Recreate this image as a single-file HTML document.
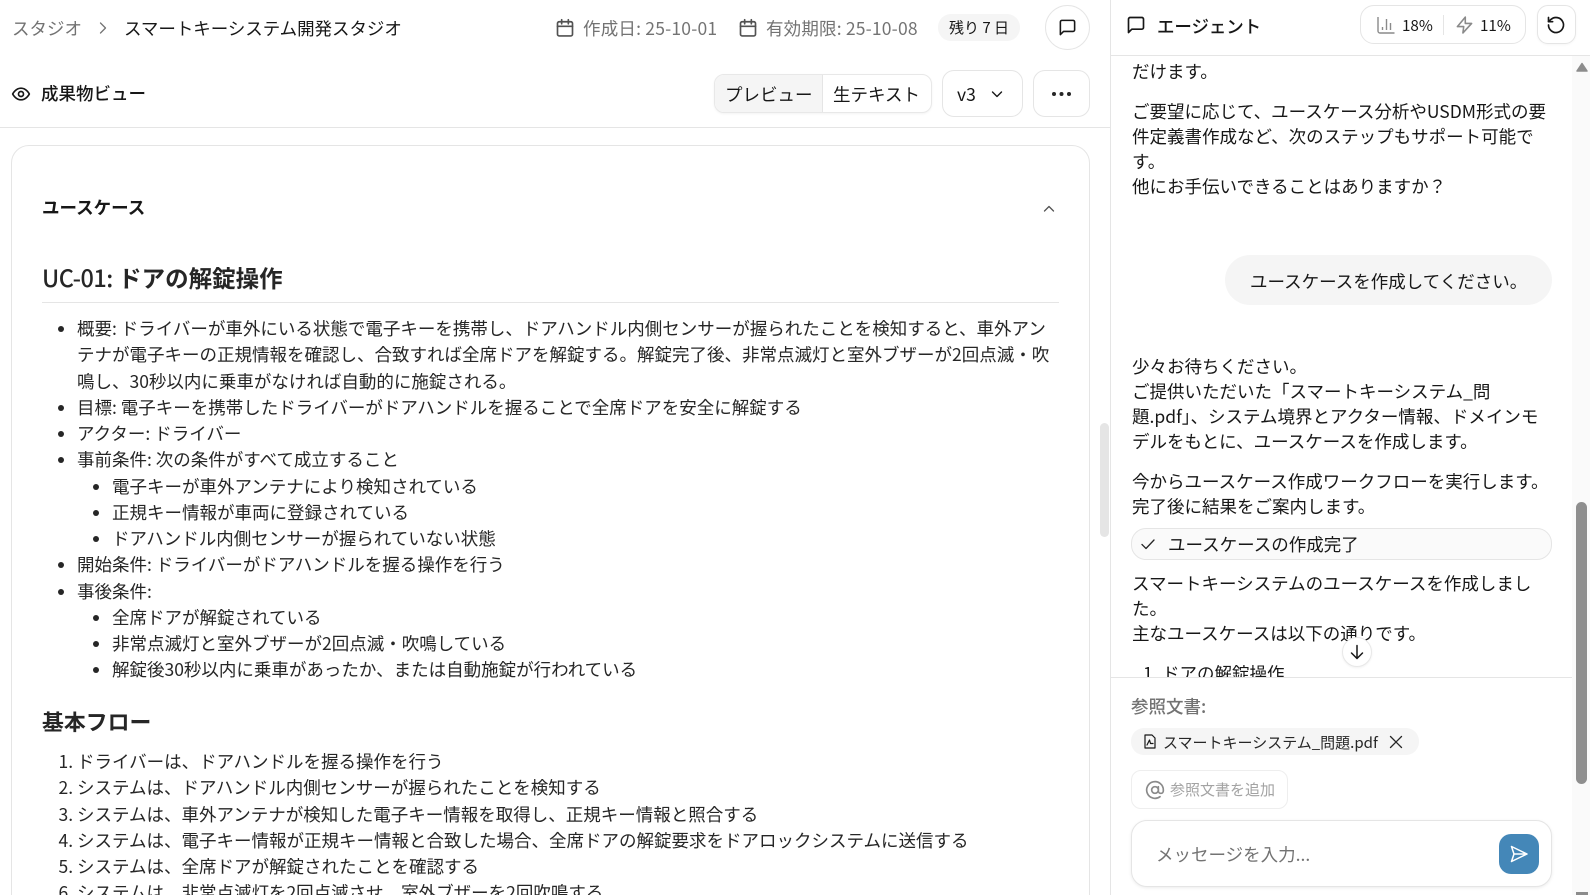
<!DOCTYPE html>
<html lang="ja"><head><meta charset="utf-8"><title>スタジオ</title>
<style>
*{box-sizing:border-box}
html,body{margin:0;padding:0;width:1590px;height:895px;overflow:hidden;background:#fff}
body{position:relative;font-family:"Noto Sans CJK JP","Liberation Sans",sans-serif;font-size:17.5px;color:#171717}
.t{position:absolute;white-space:nowrap;line-height:26px;height:26px}
.g{color:#737373}
.b{position:absolute;background:#fff;border:1px solid #e5e5e5}
svg{position:absolute;fill:none;stroke:currentColor;stroke-linecap:round;stroke-linejoin:round}
.list{position:absolute;margin:0;padding:0 0 0 35px;line-height:26.25px;color:#262626;white-space:nowrap}
.list ul,.list ol{margin:0;padding:0 0 0 35px}
.list li{margin:0}
</style></head><body>

<!-- top header -->
<div class="t g" style="left:12px;top:16px">スタジオ</div>
<svg style="left:96px;top:20px;color:#737373" width="14" height="16" viewBox="0 0 14 16" stroke-width="1.300"><path d="M4.500 3l5 5-5 5"/></svg>
<div class="t" style="left:124px;top:16px;letter-spacing:-.05px">スマートキーシステム開発スタジオ</div>

<svg style="left:555px;top:18px;color:#525252" width="20" height="20" viewBox="0 0 24 24" stroke-width="2"><rect x="3" y="4.500" width="18" height="17" rx="2"/><path d="M8 2v5M16 2v5M3 10h18"/></svg>
<div class="t g" style="left:583px;top:16px;letter-spacing:.2px">作成日: 25-10-01</div>
<svg style="left:738px;top:18px;color:#525252" width="20" height="20" viewBox="0 0 24 24" stroke-width="2"><rect x="3" y="4.500" width="18" height="17" rx="2"/><path d="M8 2v5M16 2v5M3 10h18"/></svg>
<div class="t g" style="left:766px;top:16px;letter-spacing:.18px">有効期限: 25-10-08</div>
<div style="position:absolute;left:938px;top:14px;width:82px;height:27px;background:#f5f5f5;border-radius:13px"></div>
<div class="t" style="left:949px;top:15px;font-size:15px">残り 7 日</div>
<div class="b" style="left:1045px;top:5px;width:45px;height:45px;border-radius:50%"></div>
<svg style="left:1058px;top:18px" width="19" height="19" viewBox="0 0 24 24" stroke-width="2"><path d="M21 15a2 2 0 0 1-2 2H7l-4 4V5a2 2 0 0 1 2-2h14a2 2 0 0 1 2 2z"/></svg>

<!-- second row -->
<svg style="left:11px;top:84px" width="20" height="20" viewBox="0 0 24 24" stroke-width="2"><path d="M2 12s3.500-7 10-7 10 7 10 7-3.500 7-10 7-10-7-10-7z"/><circle cx="12" cy="12" r="3"/></svg>
<div class="t" style="left:41px;top:81px;font-weight:500">成果物ビュー</div>

<div style="position:absolute;left:714px;top:74px;width:218px;height:39px;background:#fff;border:1px solid #e8e8e8;border-radius:10px;box-shadow:0 1px 2px rgba(0,0,0,.05);overflow:hidden"><div style="width:108px;height:39px;background:#f5f5f5;border-right:1px solid #e5e5e5"></div></div>
<div class="t" style="left:725px;top:82px">プレビュー</div>
<div class="t" style="left:833px;top:82px">生テキスト</div>
<div class="b" style="left:942px;top:70px;width:81px;height:47px;border-radius:12px"></div>
<div class="t" style="left:957px;top:82px">v3</div>
<svg style="left:989px;top:86px" width="16" height="16" viewBox="0 0 16 16" stroke-width="1.400"><path d="M3.500 6l4.500 4.500L12.500 6"/></svg>
<div class="b" style="left:1033px;top:70px;width:57px;height:47px;border-radius:12px"></div>
<svg style="left:1051px;top:84px;stroke:none;fill:#262626" width="22" height="20" viewBox="0 0 22 20"><circle cx="3" cy="10" r="2"/><circle cx="10.500" cy="10" r="2"/><circle cx="18" cy="10" r="2"/></svg>
<div style="position:absolute;left:0;top:127px;width:1110px;height:1px;background:#e5e5e5"></div>

<!-- card -->
<div class="b" style="left:11px;top:145px;width:1079px;height:800px;border-radius:18px"></div>
<div class="t" style="left:42px;top:195px;font-weight:700;color:#171717">ユースケース</div>
<svg style="left:1041px;top:201px;color:#525252" width="16" height="16" viewBox="0 0 16 16" stroke-width="1.300"><path d="M3.500 10L8 5.500l4.500 4.500"/></svg>

<div class="t" style="left:42px;top:262px;font-size:23.500px;line-height:30px;height:30px;font-weight:700;color:#262626"><span style="font-weight:500;letter-spacing:-.5px">UC-01:</span> ドアの解錠操作</div>
<div style="position:absolute;left:42px;top:302px;width:1017px;height:1px;background:#e5e5e5"></div>

<ul class="list" style="left:42px;top:316px;width:1017px;list-style:disc">
<li>概要: ドライバーが車外にいる状態で電子キーを携帯し、ドアハンドル内側センサーが握られたことを検知すると、車外アン<br>テナが電子キーの正規情報を確認し、合致すれば全席ドアを解錠する。解錠完了後、非常点滅灯と室外ブザーが2回点滅・吹<br>鳴し、30秒以内に乗車がなければ自動的に施錠される。</li>
<li>目標: 電子キーを携帯したドライバーがドアハンドルを握ることで全席ドアを安全に解錠する</li>
<li>アクター: ドライバー</li>
<li>事前条件: 次の条件がすべて成立すること
<ul style="list-style:disc">
<li>電子キーが車外アンテナにより検知されている</li>
<li>正規キー情報が車両に登録されている</li>
<li>ドアハンドル内側センサーが握られていない状態</li>
</ul></li>
<li>開始条件: ドライバーがドアハンドルを握る操作を行う</li>
<li>事後条件:
<ul style="list-style:disc">
<li>全席ドアが解錠されている</li>
<li>非常点滅灯と室外ブザーが2回点滅・吹鳴している</li>
<li>解錠後30秒以内に乗車があったか、または自動施錠が行われている</li>
</ul></li>
</ul>

<div class="t" style="left:42px;top:707px;font-size:21.875px;line-height:30px;height:30px;font-weight:700;color:#262626">基本フロー</div>
<ol class="list" style="left:42px;top:749px;width:1017px">
<li>ドライバーは、ドアハンドルを握る操作を行う</li>
<li>システムは、ドアハンドル内側センサーが握られたことを検知する</li>
<li>システムは、車外アンテナが検知した電子キー情報を取得し、正規キー情報と照合する</li>
<li>システムは、電子キー情報が正規キー情報と合致した場合、全席ドアの解錠要求をドアロックシステムに送信する</li>
<li>システムは、全席ドアが解錠されたことを確認する</li>
<li>システムは、非常点滅灯を2回点滅させ、室外ブザーを2回吹鳴する</li>
</ol>

<!-- left scrollbar -->
<div style="position:absolute;left:1100px;top:423px;width:9px;height:114px;background:#e5e5e5;border-radius:4.500px"></div>

<!-- right panel -->
<div style="position:absolute;left:1110px;top:0;width:1px;height:895px;background:#e5e5e5"></div>
<div style="position:absolute;left:1110px;top:55px;width:480px;height:1px;background:#e5e5e5"></div>
<svg style="left:1126px;top:15px" width="20" height="20" viewBox="0 0 24 24" stroke-width="2"><path d="M21 15a2 2 0 0 1-2 2H7l-4 4V5a2 2 0 0 1 2-2h14a2 2 0 0 1 2 2z"/></svg>
<div class="t" style="left:1157px;top:14px;font-weight:500;letter-spacing:-.1px">エージェント</div>

<div class="b" style="left:1360px;top:5px;width:166px;height:39px;border-radius:14px"></div>
<svg style="left:1377px;top:16px;color:#8a8a8a" width="18" height="18" viewBox="0 0 18 18" stroke-width="1.400"><path d="M1 1v14a2 2 0 0 0 2 2h14.500M5.500 14v-3M9.500 14V3M13.500 14V7" stroke-linecap="butt"/></svg>
<div class="t" style="left:1402px;top:12px;font-size:15.200px">18%</div>
<div style="position:absolute;left:1443px;top:15px;width:1px;height:20px;background:#e5e5e5"></div>
<svg style="left:1455px;top:15px;color:#8a8a8a" width="19" height="20" viewBox="0 0 24 24" stroke-width="2"><path d="M13 2L3 14h8l-1 8 11-12h-8z"/></svg>
<div class="t" style="left:1480px;top:12px;font-size:15.200px">11%</div>
<div class="b" style="left:1537px;top:5px;width:39px;height:39px;border-radius:11px;box-shadow:0 1px 2px rgba(0,0,0,.04)"></div>
<svg style="left:1546px;top:15px" width="20" height="20" viewBox="0 0 24 24" stroke-width="2"><path d="M3 12a9 9 0 1 0 3-6.700L3 8"/><path d="M3 3v5h5"/></svg>

<!-- scrollbar -->
<div style="position:absolute;left:1572px;top:56px;width:18px;height:839px;background:#fafafa"></div>
<svg style="left:1574px;top:60px;stroke:#8c8c8c;fill:#8c8c8c" width="16" height="14" viewBox="0 0 16 14" stroke-width="1.500"><path d="M8 3.500L13 11H3z"/></svg>
<div style="position:absolute;left:1576px;top:502px;width:11px;height:282px;background:#8f8f8f;border-radius:5.500px"></div>
<div style="position:absolute;left:1575.500px;top:892px;width:12px;height:3px;background:#8c8c8c"></div>

<!-- messages -->
<div class="t" style="left:1132px;top:59px">だけます。</div>
<div class="t" style="left:1132px;top:99px">ご要望に応じて、ユースケース分析やUSDM形式の要</div>
<div class="t" style="left:1132px;top:124px">件定義書作成など、次のステップもサポート可能で</div>
<div class="t" style="left:1132px;top:149px">す。</div>
<div class="t" style="left:1132px;top:174px">他にお手伝いできることはありますか？</div>

<div style="position:absolute;left:1225px;top:255px;width:327px;height:50px;background:#f5f5f5;border-radius:25px"></div>
<div class="t" style="left:1250px;top:269px">ユースケースを作成してください。</div>

<div class="t" style="left:1132px;top:354px">少々お待ちください。</div>
<div class="t" style="left:1132px;top:379px">ご提供いただいた「スマートキーシステム_問</div>
<div class="t" style="left:1132px;top:404px">題.pdf」、システム境界とアクター情報、ドメインモ</div>
<div class="t" style="left:1132px;top:429px">デルをもとに、ユースケースを作成します。</div>
<div class="t" style="left:1132px;top:469px">今からユースケース作成ワークフローを実行します。</div>
<div class="t" style="left:1132px;top:494px">完了後に結果をご案内します。</div>

<div style="position:absolute;left:1131px;top:528px;width:421px;height:32px;background:#fafafa;border:1px solid #e5e5e5;border-radius:15px"></div>
<svg style="left:1140px;top:536px;color:#262626" width="16" height="16" viewBox="0 0 16 16" stroke-width="1.300"><path d="M2 8.500l4 4 8-8.500"/></svg>
<div class="t" style="left:1168px;top:532px">ユースケースの作成完了</div>

<div class="t" style="left:1132px;top:571px">スマートキーシステムのユースケースを作成しまし</div>
<div class="t" style="left:1132px;top:596px">た。</div>
<div class="t" style="left:1132px;top:621px">主なユースケースは以下の通りです。</div>
<div style="position:absolute;left:1111px;top:660px;width:461px;height:17px;overflow:hidden"><div class="t" style="left:32px;top:1px">1.</div><div class="t" style="left:51px;top:1px">ドアの解錠操作</div></div>
<div style="position:absolute;left:1111px;top:677px;width:461px;height:1px;background:#e5e5e5"></div>

<div style="position:absolute;left:1342px;top:637px;width:30px;height:30px;border-radius:50%;background:#fff;border:1px solid #e8e8e8;box-shadow:0 1px 2px rgba(0,0,0,.06)"></div>
<svg style="left:1348px;top:643px" width="18" height="18" viewBox="0 0 18 18" stroke-width="1.500"><path d="M9 2.500v13M3.500 10L9 15.500 14.500 10"/></svg>

<div class="t g" style="left:1131px;top:694px;font-weight:500">参照文書:</div>
<div style="position:absolute;left:1131px;top:728px;width:288px;height:27px;background:#f5f5f5;border-radius:13px"></div>
<svg style="left:1143px;top:734px" width="14" height="15" viewBox="0 0 14 15" stroke-width="1.200"><path d="M2 1h7l3 3v10H2zM4 11l2.500-5 1 3.500H10"/></svg>
<div class="t" style="left:1163px;top:730px;font-size:15px;color:#262626">スマートキーシステム_問題.pdf</div>
<svg style="left:1388px;top:734px;color:#262626" width="16" height="16" viewBox="0 0 16 16" stroke-width="1.300"><path d="M2.500 2.500l11 11M13.500 2.500l-11 11"/></svg>

<div style="position:absolute;left:1131px;top:770px;width:157px;height:39px;background:#fff;border:1px solid #eeeeee;border-radius:10px"></div>
<svg style="left:1145px;top:780px;color:#8a8a8a" width="20" height="20" viewBox="0 0 24 24" stroke-width="2"><circle cx="12" cy="12" r="4"/><path d="M16 8v5a3 3 0 0 0 6 0v-1a10 10 0 1 0-4 8"/></svg>
<div class="t" style="left:1170px;top:777px;font-size:15px;color:#a3a3a3">参照文書を追加</div>

<div style="position:absolute;left:1131px;top:820px;width:421px;height:67px;background:#fff;border:1px solid #e5e5e5;border-radius:16px;box-shadow:0 1px 3px rgba(0,0,0,.08)"></div>
<div class="t g" style="left:1156px;top:842px">メッセージを入力...</div>
<div style="position:absolute;left:1499px;top:834px;width:40px;height:40px;background:#4487b8;border-radius:12px"></div>
<svg style="left:1509px;top:844px;color:#fff" width="20" height="20" viewBox="0 0 20 20" stroke-width="1.500"><path d="M2.500 2.500L18 10 2.500 17.500 5 10zM5 10h13"/></svg>
</body></html>
